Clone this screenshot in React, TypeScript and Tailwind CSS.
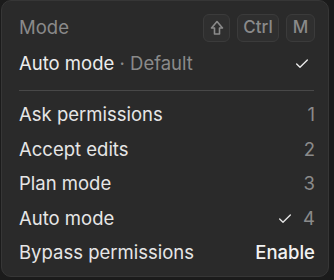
import { Check } from "lucide-react";

const items = [
  { label: "Ask permissions", hint: "1" },
  { label: "Accept edits", hint: "2" },
  { label: "Plan mode", hint: "3" },
  { label: "Auto mode", hint: "4", checked: true },
];

function Key({ children, w }: { children: React.ReactNode; w: string }) {
  return (
    <div
      className={`${w} flex h-[28px] items-center justify-center rounded-[6px] border border-[#3b3b3b] bg-[#2f2f2f] text-[17px] font-medium text-[#8a8a8a]`}
    >
      {children}
    </div>
  );
}

export default function App() {
  return (
    <div
      className="h-[280px] w-[334px] overflow-hidden bg-[#1b1b1b]"
      style={{ fontFamily: "Inter, 'Noto Sans', sans-serif" }}
    >
      <div className="ml-px h-[277px] w-[328px] rounded-[10px] border border-[#363636] bg-[#2a2a2a] pl-[17px] pr-[13px] pt-[13px]">
        <div className="flex h-[28px] items-center justify-between">
          <span className="text-[18.5px] text-[#8a8a8a]">Mode</span>
          <div className="flex gap-[7px]">
            <Key w="w-[27px]">
              <svg width="14" height="16" viewBox="0 0 14 16" fill="none" stroke="currentColor" strokeWidth="1.6" strokeLinejoin="round">
                <path d="M7 1.5 L12.5 8 H9.5 V14 H4.5 V8 H1.5 Z" />
              </svg>
            </Key>
            <Key w="w-[42px]">Ctrl</Key>
            <Key w="w-[29px]">M</Key>
          </div>
        </div>

        <div className="mt-[5px] flex h-[34px] items-center justify-between">
          <span className="text-[18.5px] text-[#ececec]">
            Auto mode <span className="text-[#8a8a8a]">· Default</span>
          </span>
          <Check className="mr-[5px] h-[16px] w-[16px] text-[#ececec]" strokeWidth={2} />
        </div>

        <div className="mr-[1px] mt-[9px] h-px bg-[#484848]" />

        <div className="mt-[7px]">
          {items.map((it) => (
            <div key={it.label} className="flex h-[34.5px] items-center justify-between">
              <span className="text-[18.5px] text-[#e6e6e6]">{it.label}</span>
              <span className="flex items-center gap-[10px] text-[18.5px] text-[#8a8a8a]">
                {it.checked && (
                  <Check className="h-[16px] w-[16px] text-[#e6e6e6]" strokeWidth={2} />
                )}
                {it.hint}
              </span>
            </div>
          ))}
          <div className="flex h-[34.5px] items-center justify-between">
            <span className="text-[18.5px] text-[#e6e6e6]">Bypass permissions</span>
            <span className="text-[18.5px] font-medium text-[#f2f2f2]">Enable</span>
          </div>
        </div>
      </div>
    </div>
  );
}
